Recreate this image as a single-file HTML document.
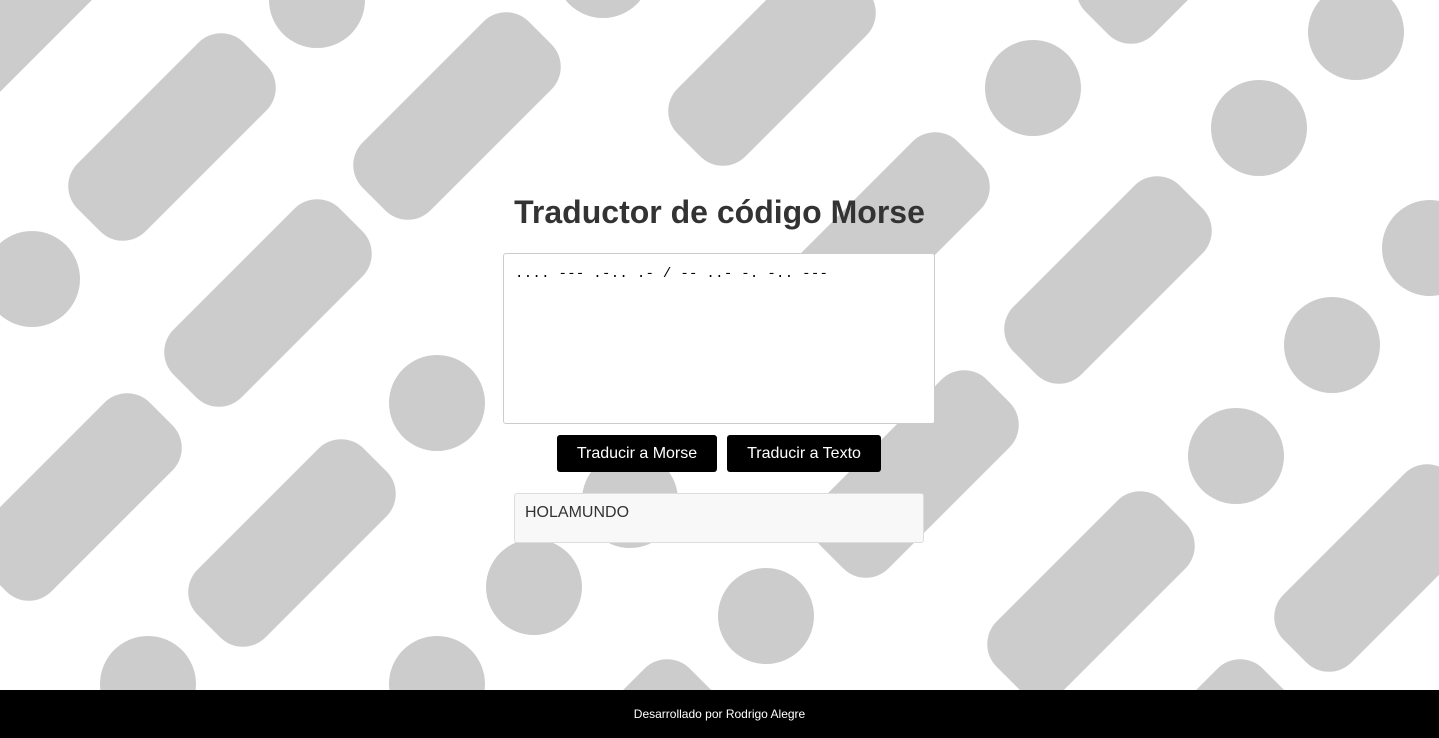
<!DOCTYPE html>
<html><head><meta charset="utf-8"><style>
html,body{margin:0;padding:0;width:1439px;height:738px;overflow:hidden;background:#fff;font-family:"Liberation Sans",Arial,sans-serif;}
svg.bg{position:absolute;left:0;top:0}
h1{position:absolute;left:0;width:1439px;text-align:center;top:194px;margin:0;font-size:32px;font-weight:bold;color:#333}
.ta{position:absolute;left:503px;top:253px;width:430px;height:169px;border:1px solid #ccc;border-radius:3px;background:#fff;font-family:"Liberation Mono",monospace;font-size:14px;letter-spacing:0.3px;color:#000}
.ta span{position:absolute;left:11px;top:12px;white-space:pre}
.btn{position:absolute;top:435px;height:37px;background:#000;color:#fff;border-radius:3px;font-size:16px;line-height:37px;text-align:center}
.out{position:absolute;left:514px;top:493px;width:408px;height:48px;border:1px solid #ddd;border-radius:3px;background:#f8f8f8;color:#333;font-size:16px}
.out span{position:absolute;left:10px;top:10px}
footer{position:absolute;left:0;top:690px;width:1439px;height:48px;background:#000;color:#fff;font-size:12px;text-align:center;line-height:48px}
</style></head><body>
<svg class="bg" width="1439" height="690" viewBox="0 0 1439 690">
<defs><rect id="p" x="-117.5" y="-48" width="235" height="96" rx="32"/></defs>
<g fill="#cccccc">
<circle cx="317" cy="0" r="48"/><circle cx="603" cy="-30" r="48"/><circle cx="1033" cy="88" r="48"/>
<circle cx="1356" cy="32" r="48"/><circle cx="1259" cy="128" r="48"/><circle cx="32" cy="279" r="48"/>
<circle cx="1430" cy="248" r="48"/><circle cx="437" cy="403" r="48"/><circle cx="1332" cy="345" r="48"/>
<circle cx="1236" cy="456" r="48"/><circle cx="534" cy="587" r="48"/><circle cx="766" cy="616" r="48"/>
<circle cx="148" cy="684" r="48"/><circle cx="437" cy="684" r="48"/><circle cx="630" cy="500" r="48"/>
<use href="#p" transform="translate(172,137) rotate(-45)"/>
<use href="#p" transform="translate(457,116) rotate(-45)"/>
<use href="#p" transform="translate(772,62) rotate(-45)"/>
<use href="#p" transform="translate(268,303) rotate(-45)"/>
<use href="#p" transform="translate(78,497) rotate(-45)"/>
<use href="#p" transform="translate(292,543) rotate(-45)"/>
<use href="#p" transform="translate(1108,280) rotate(-45)"/>
<use href="#p" transform="translate(886,236) rotate(-45)"/>
<use href="#p" transform="translate(915,474) rotate(-45)"/>
<use href="#p" transform="translate(1091,595) rotate(-45)"/>
<use href="#p" transform="translate(1378,568) rotate(-45)"/>
<use href="#p" transform="translate(12,12) rotate(-45)"/>
<use href="#p" transform="translate(1180,-60) rotate(-45)"/>
<use href="#p" transform="translate(618,763) rotate(-45)"/>
<use href="#p" transform="translate(1191,763) rotate(-45)"/>
</g>
</svg>
<h1>Traductor de código Morse</h1>
<div class="ta"><span>.... --- .-.. .- / -- ..- -. -.. ---</span></div>
<div class="btn" style="left:557px;width:160px">Traducir a Morse</div>
<div class="btn" style="left:727px;width:154px">Traducir a Texto</div>
<div class="out"><span>HOLAMUNDO</span></div>
<footer>Desarrollado por Rodrigo Alegre</footer>
</body></html>
